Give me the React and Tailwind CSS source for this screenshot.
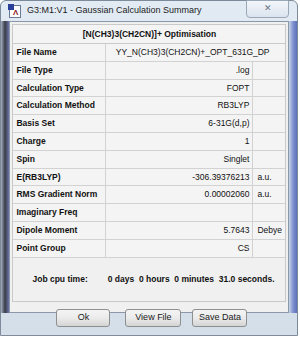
import React from 'react';

const rows = [
  { label: 'File Name', value: 'YY_N(CH3)3(CH2CN)+_OPT_631G_DP', unit: '', wide: true },
  { label: 'File Type', value: '.log', unit: '' },
  { label: 'Calculation Type', value: 'FOPT', unit: '' },
  { label: 'Calculation Method', value: 'RB3LYP', unit: '' },
  { label: 'Basis Set', value: '6-31G(d,p)', unit: '' },
  { label: 'Charge', value: '1', unit: '' },
  { label: 'Spin', value: 'Singlet', unit: '' },
  { label: 'E(RB3LYP)', value: '-306.39376213', unit: 'a.u.' },
  { label: 'RMS Gradient Norm', value: '0.00002060', unit: 'a.u.' },
  { label: 'Imaginary Freq', value: '', unit: '' },
  { label: 'Dipole Moment', value: '5.7643', unit: 'Debye' },
  { label: 'Point Group', value: 'CS', unit: '' },
];

const WinButton = ({ children, className }) => (
  <button
    className={`h-[18px] rounded-[3px] border border-[#8e8f8f] bg-gradient-to-b from-[#f4f4f4] via-[#ebebeb] to-[#d4d4d4] text-[9px] leading-none text-[#222] ${className}`}
  >
    {children}
  </button>
);

const App = () => {
  return (
    <div className="relative h-[338px] w-[300px] overflow-hidden bg-white font-['Liberation_Sans',Arial,sans-serif]">
      <div className="relative h-[336px] w-[298px] rounded-t-[6px] border border-[#7d8a99] bg-gradient-to-b from-[#e2ebf4] to-[#d3dee9]">
        {/* title bar */}
        <div className="flex h-[20px] items-center pl-[8px]">
          <div className="relative mr-[6px] h-[13px] w-[12px] border border-[#6a7b96] bg-white">
            <div className="absolute left-[-2px] top-[-2px] h-[6px] w-[6px] bg-[#2a3f9a]" />
            <div className="absolute left-[3px] top-[3px] text-[8px] font-bold leading-none text-[#8a2222]">Λ</div>
          </div>
          <span className="whitespace-nowrap text-[9px] text-[#1b1b1b]">
            G3:M1:V1 - Gaussian Calculation Summary
          </span>
        </div>
        <div className="absolute right-[8px] top-[-1px] flex h-[18px] w-[43px] items-center justify-center rounded-b-[4px] border border-[#9aa7b6] bg-gradient-to-b from-[#f3f6fa] to-[#dbe4ee] text-[9px] text-[#6b7684]">
          ✕
        </div>

        {/* body */}
        <div className="flex h-[292px]">
          <div className="w-[9px] bg-gradient-to-r from-[#a6b0c4] via-[#3a3d47] to-[#6f74ac]" />
          <div className="w-[280px] border border-[#8a97a8] bg-[#f0f0f0]">
            <div className="mx-[2px] mt-[2px] flex h-[20px] items-center justify-center border border-[#c9c9c9] bg-[#f4f4f4] text-[8.5px] font-bold text-[#111]">
              [N(CH3)3(CH2CN)]+ Optimisation
            </div>
            <div className="mx-[2px] border-x border-[#c9c9c9] bg-[#f4f4f4]">
              {rows.map((r) => (
                <div key={r.label} className="flex h-[17.8px] whitespace-nowrap border-b border-[#d2d2d2] text-[8.5px] text-[#111]">
                  <div className="flex w-[93px] items-center border-r border-[#d2d2d2] pl-[3px] font-bold">{r.label}</div>
                  {r.wide ? (
                    <div className="flex w-[181px] items-center pl-[10px]">{r.value}</div>
                  ) : (
                    <>
                      <div className="flex w-[147px] items-center justify-end border-r border-[#d2d2d2] pr-[3px]">{r.value}</div>
                      <div className="flex flex-1 items-center pl-[4px]">{r.unit}</div>
                    </>
                  )}
                </div>
              ))}
            </div>
            <div className="mx-[2px] flex h-[44px] items-start whitespace-nowrap border-x border-b border-[#c9c9c9] bg-[#f0f0f0] pt-[15px] text-[8.5px] font-bold text-[#111]">
              <span className="ml-[19px]">Job cpu time:</span>
              <span className="ml-[20px] whitespace-pre">0 days  0 hours  0 minutes  31.0 seconds.</span>
            </div>
            <div className="flex items-center pt-[7px]">
              <WinButton className="ml-[46px] w-[54px]">Ok</WinButton>
              <WinButton className="ml-[15px] w-[56px]">View File</WinButton>
              <WinButton className="ml-[11px] w-[55px]">Save Data</WinButton>
            </div>
          </div>
          <div className="w-[8px] bg-gradient-to-r from-[#cad5e6] via-[#8192d0] to-[#5d6fb8]" />
        </div>
      </div>
    </div>
  );
};

export default App;
